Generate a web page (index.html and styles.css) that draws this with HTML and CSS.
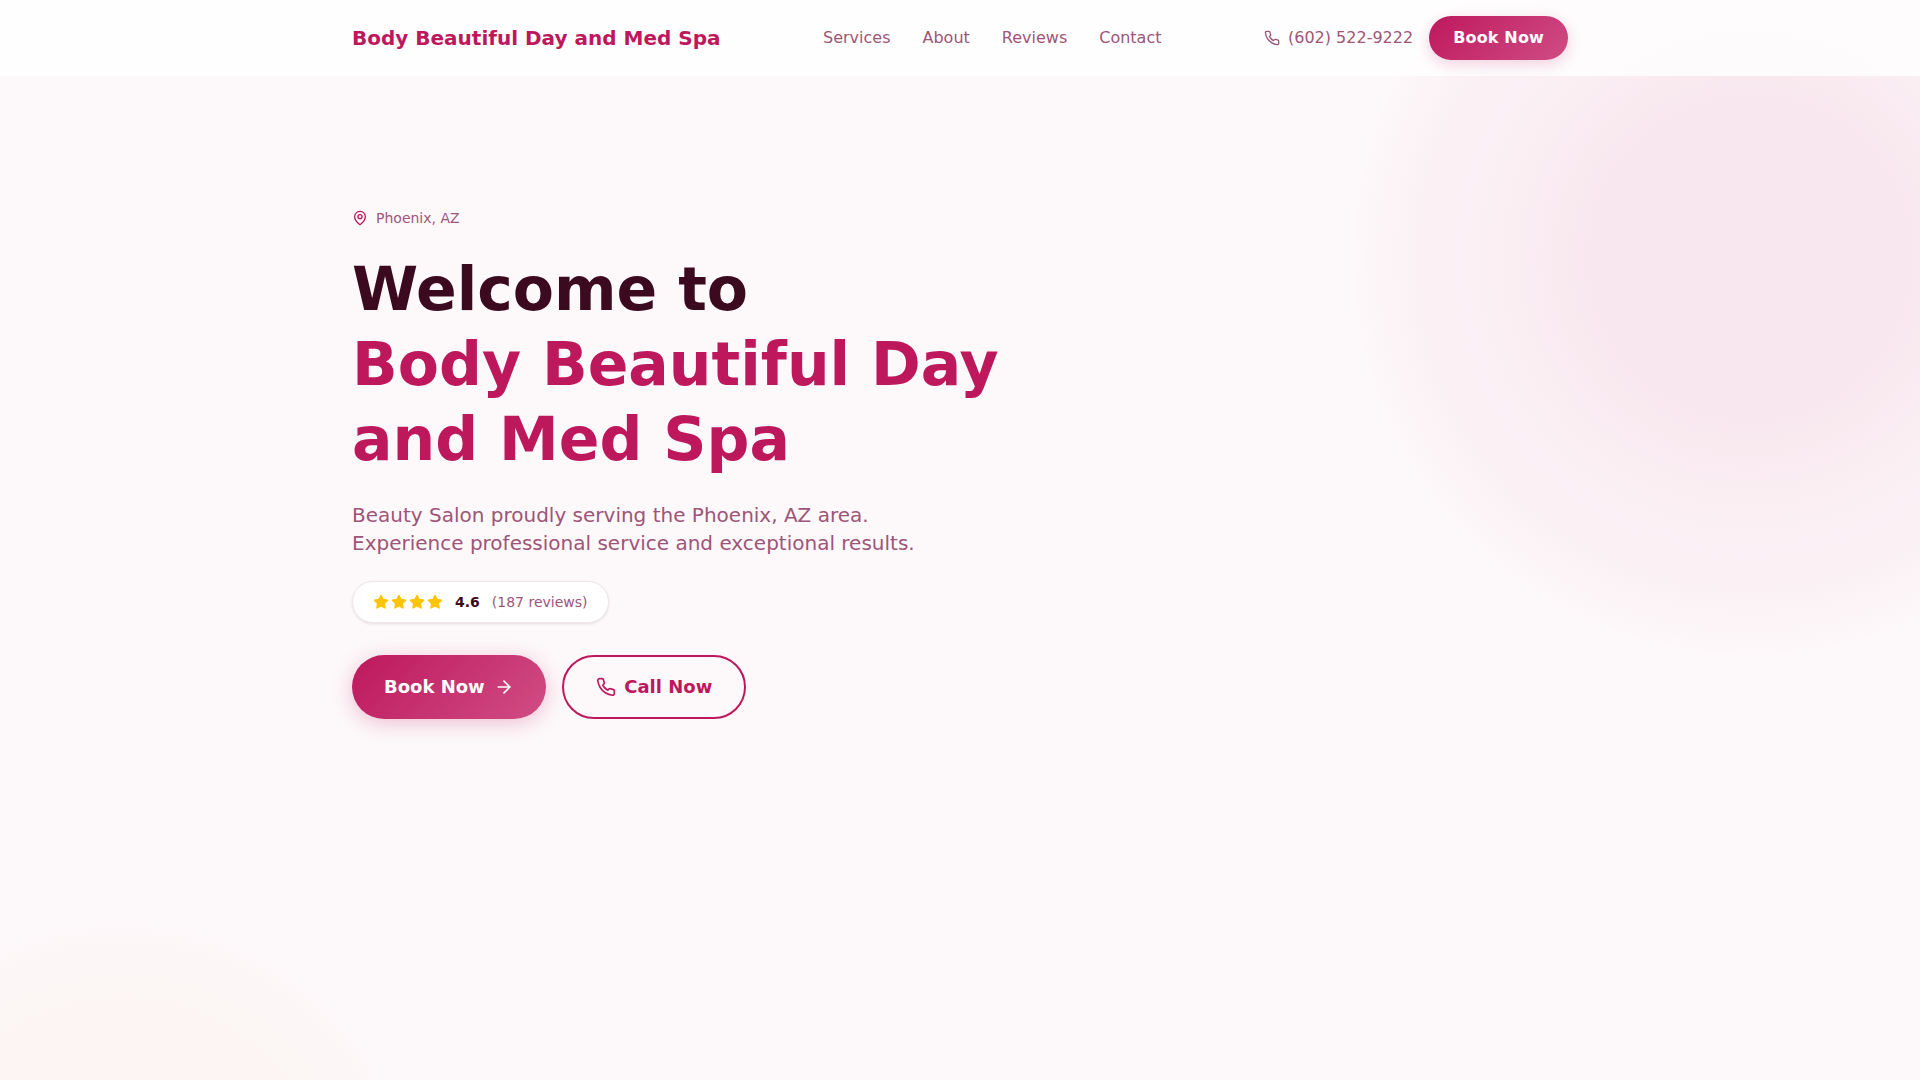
FILE: index.html
```html
<!DOCTYPE html>
<html lang="en">
<head>
<meta charset="utf-8">
<title>Body Beautiful Day and Med Spa</title>
<link rel="stylesheet" href="styles.css">
</head>
<body>
<div class="blob blob-pink"></div>
<div class="blob blob-gold"></div>
<header class="nav">
  <div class="nav-inner">
    <a class="logo" href="#">Body Beautiful Day and Med Spa</a>
    <nav class="links">
      <a href="#">Services</a>
      <a href="#">About</a>
      <a href="#">Reviews</a>
      <a href="#">Contact</a>
    </nav>
    <div class="nav-right">
      <a class="phone" href="#">
        <svg class="icon-16" viewBox="0 0 24 24"><path d="M22 16.92v3a2 2 0 0 1-2.18 2 19.79 19.79 0 0 1-8.63-3.07 19.5 19.5 0 0 1-6-6 19.79 19.79 0 0 1-3.07-8.67A2 2 0 0 1 4.11 2h3a2 2 0 0 1 2 1.72 12.84 12.84 0 0 0 .7 2.81 2 2 0 0 1-.45 2.11L8.09 9.91a16 16 0 0 0 6 6l1.27-1.27a2 2 0 0 1 2.11-.45 12.84 12.84 0 0 0 2.81.7A2 2 0 0 1 22 16.92z"/></svg>
        <span>(602) 522-9222</span>
      </a>
      <a class="btn-small" href="#">Book Now</a>
    </div>
  </div>
</header>
<main class="hero">
  <div class="location">
    <svg class="icon-16 pin" viewBox="0 0 24 24"><path d="M20 10c0 6-8 12-8 12s-8-6-8-12a8 8 0 0 1 16 0Z"/><circle cx="12" cy="10" r="3"/></svg>
    <span>Phoenix, AZ</span>
  </div>
  <h1>Welcome to <span class="accent">Body Beautiful Day and Med Spa</span></h1>
  <p class="sub">Beauty Salon proudly serving the Phoenix, AZ area.<br>Experience professional service and exceptional results.</p>
  <div class="rating">
    <div class="stars">
      <svg class="star" viewBox="0 0 24 24"><polygon points="12 2 15.09 8.26 22 9.27 17 14.14 18.18 21.02 12 17.77 5.82 21.02 7 14.14 2 9.27 8.91 8.26 12 2"/></svg>
      <svg class="star" viewBox="0 0 24 24"><polygon points="12 2 15.09 8.26 22 9.27 17 14.14 18.18 21.02 12 17.77 5.82 21.02 7 14.14 2 9.27 8.91 8.26 12 2"/></svg>
      <svg class="star" viewBox="0 0 24 24"><polygon points="12 2 15.09 8.26 22 9.27 17 14.14 18.18 21.02 12 17.77 5.82 21.02 7 14.14 2 9.27 8.91 8.26 12 2"/></svg>
      <svg class="star" viewBox="0 0 24 24"><polygon points="12 2 15.09 8.26 22 9.27 17 14.14 18.18 21.02 12 17.77 5.82 21.02 7 14.14 2 9.27 8.91 8.26 12 2"/></svg>
    </div>
    <strong>4.6</strong>
    <span class="count">(187 reviews)</span>
  </div>
  <div class="actions">
    <a class="btn btn-primary" href="#">Book Now
      <svg class="icon-20" viewBox="0 0 24 24"><path d="M5 12h14"/><path d="m12 5 7 7-7 7"/></svg>
    </a>
    <a class="btn btn-outline" href="#">
      <svg class="icon-20" viewBox="0 0 24 24"><path d="M22 16.92v3a2 2 0 0 1-2.18 2 19.79 19.79 0 0 1-8.63-3.07 19.5 19.5 0 0 1-6-6 19.79 19.79 0 0 1-3.07-8.67A2 2 0 0 1 4.11 2h3a2 2 0 0 1 2 1.72 12.84 12.84 0 0 0 .7 2.81 2 2 0 0 1-.45 2.11L8.09 9.91a16 16 0 0 0 6 6l1.27-1.27a2 2 0 0 1 2.11-.45 12.84 12.84 0 0 0 2.81.7A2 2 0 0 1 22 16.92z"/></svg>
      Call Now
    </a>
  </div>
</main>
</body>
</html>
```
FILE: styles.css
```css
* { box-sizing: border-box; }
html, body { margin: 0; height: 100%; }
html { overflow: hidden; }
body {
  position: relative;
  height: 1080px;
  overflow: hidden;
  background: #fdf8fa;
  color: #3b0a1e;
  font-family: "DejaVu Sans", sans-serif;
}
a { color: inherit; text-decoration: none; }
svg { display: block; flex: none; fill: none; stroke: currentColor; stroke-width: 2; stroke-linecap: round; stroke-linejoin: round; }
.icon-16 { width: 16px; height: 16px; }
.icon-20 { width: 20px; height: 20px; }

.blob { position: absolute; border-radius: 50%; }
.blob-pink {
  width: 800px; height: 800px;
  top: -142px; left: 1350px;
  background: radial-gradient(circle,
    rgba(190, 24, 93, 0.08) 0%,
    rgba(190, 24, 93, 0.08) 25%,
    rgba(190, 24, 93, 0.045) 44%,
    rgba(190, 24, 93, 0.03) 58%,
    rgba(190, 24, 93, 0.012) 66%,
    rgba(190, 24, 93, 0) 71%);
}
.blob-gold {
  width: 600px; height: 600px;
  top: 917px; left: -178px;
  background: radial-gradient(circle,
    rgba(200, 150, 40, 0.045) 0%,
    rgba(200, 150, 40, 0.028) 50%,
    rgba(200, 150, 40, 0.012) 66%,
    rgba(200, 150, 40, 0) 71%);
}

.nav {
  position: relative;
  height: 76px;
  background: rgba(255, 255, 255, 0.8);
}
.nav-inner {
  width: 1280px;
  height: 100%;
  margin: 0 auto;
  padding: 0 32px;
  display: flex;
  align-items: center;
  justify-content: space-between;
}
.logo { font-size: 20px; font-weight: 700; color: #be185d; }
.links { display: flex; gap: 32px; margin-bottom: 1px; font-size: 16px; color: #9d5578; }
.nav-right { display: flex; align-items: center; gap: 16px; }
.phone { display: flex; align-items: center; gap: 8px; margin-bottom: 1px; font-size: 16px; color: #9d5578; }
.btn-small {
  display: block;
  height: 44px;
  padding: 0 24px;
  line-height: 44px;
  border-radius: 999px;
  font-size: 16px;
  font-weight: 700;
  letter-spacing: 0.01em;
  color: #fff;
  background: linear-gradient(135deg, #be185d, #d04d84);
  box-shadow: 0 4px 15px rgba(190, 24, 93, 0.2);
}

.hero { position: relative; width: 1280px; margin: 0 auto; padding: 132px 32px 0; }
.location { display: flex; align-items: center; gap: 8px; height: 20px; font-size: 14px; color: #9d5578; }
.pin { color: #be185d; }
h1 { width: 720px; margin: 24px 0 0; font-size: 60px; line-height: 75px; font-weight: 700; color: #3b0a1e; }
.accent { display: block; color: #be185d; }
.sub { margin: 24px 0 0; font-size: 20px; line-height: 28px; color: #9d5578; }
.rating {
  display: inline-flex;
  align-items: center;
  gap: 12px;
  height: 42px;
  margin-top: 24px;
  padding: 0 20px;
  background: #fff;
  border: 1px solid #f0e6ea;
  border-radius: 999px;
  box-shadow: 0 1px 3px rgba(0, 0, 0, 0.1);
  font-size: 14px;
}
.stars { display: flex; gap: 2px; }
.star { width: 16px; height: 16px; fill: #ffc400; stroke: #ffc400; }
.rating strong { font-weight: 700; }
.count { color: #9d5578; }
.actions { display: flex; gap: 16px; margin-top: 32px; }
.btn {
  display: flex;
  align-items: center;
  gap: 8px;
  height: 64px;
  padding: 0 32px;
  border-radius: 999px;
  font-size: 18px;
  line-height: 20px;
  font-weight: 700;
}
.btn-primary {
  gap: 9.5px;
  color: #fff;
  background: linear-gradient(135deg, #be185d, #d04d84);
  box-shadow: 0 4px 20px rgba(190, 24, 93, 0.25);
}
.btn-outline { color: #be185d; border: 2px solid #be185d; }
```
